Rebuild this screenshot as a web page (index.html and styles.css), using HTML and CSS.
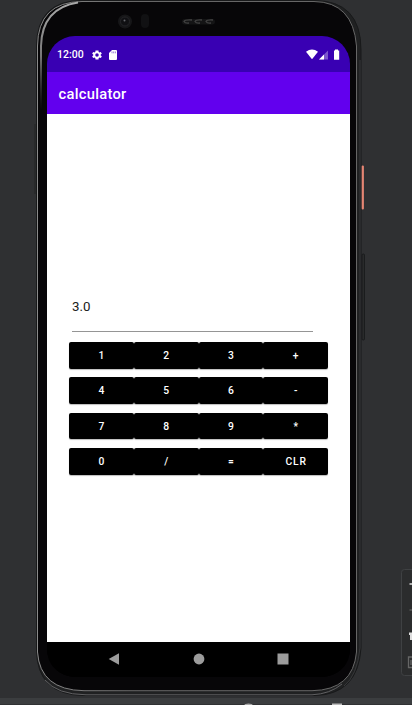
FILE: index.html
```html
<!DOCTYPE html>
<html lang="en">
<head>
<meta charset="utf-8">
<title>calculator</title>
<link rel="stylesheet" href="styles.css">
</head>
<body>
<div class="desktop">
  <svg class="shell" viewBox="0 0 412 705" aria-hidden="true">
    <defs>
      <linearGradient id="metal" x1="0" y1="0" x2="1" y2="0">
        <stop offset="0" stop-color="#8a8a8a"/><stop offset=".3" stop-color="#666"/><stop offset="1" stop-color="#666"/>
      </linearGradient>
      <linearGradient id="shine" x1="0" y1="0" x2="0" y2="1">
        <stop offset="0" stop-color="#aaa"/><stop offset=".5" stop-color="#777"/><stop offset="1" stop-color="#444" stop-opacity="0"/>
      </linearGradient>
    </defs>
    <rect x="34" y="124" width="2" height="70" fill="#28292a"/>
    <path d="M36.500 650V46Q37 .5 82 .5H314Q361 .5 361 50V648Q358 695 314 695.500H84Q37 695 36.500 650Z" fill="#202122" stroke="#18191a"/>
    <path d="M37.500 652V46Q38 2 82 1.500H314Q353 2 356.500 46V652Q353 690 312 690.700H84Q40 690 37.500 652Z" fill="#070608" stroke="url(#metal)"/>
    <path d="M41 110V46Q42 8 78 2.500" fill="none" stroke="url(#shine)" stroke-width="2"/>
    <path d="M45 680Q57 694.500 86 694.800H312Q330 694 342 684" fill="none" stroke="#606062"/>
    <path d="M360 60V648Q357 676 344 686" fill="none" stroke="#37383a"/>
    <rect x="361.700" y="165.500" width="2.200" height="44" rx="1" fill="#e58573"/>
    <rect x="362" y="254" width="2.500" height="86" rx="1" fill="#292a2b" stroke="#171819" stroke-width=".8"/>
    <circle cx="125" cy="21.500" r="7" fill="#161618"/>
    <circle cx="125" cy="21.500" r="4.500" fill="#101013" stroke="#252528"/>
    <circle cx="124.500" cy="20.500" r="1" fill="#66676d"/>
    <rect x="141" y="14" width="8" height="14" rx="4" fill="#111113"/>
    <rect x="182" y="19" width="33" height="5.500" rx="2.700" fill="#141415"/>
    <path d="M192 20q-7-.5-8 1.500 1 2 5 1.500M202 20q-6-.5-7 1.500 1 2 5 1.500M213 20q-6-.5-7 1.500 1 2 5 1.500" fill="none" stroke="#414141" stroke-width="1.300"/>
  </svg>
  <main class="screen">
    <header class="status">
      <span class="clock">12:00</span>
      <svg class="gear" viewBox="0 0 24 24"><path fill="#fff" fill-rule="evenodd" d="M19.400 13a8 8 0 0 0 0-2l2.200-1.700-2-3.500-2.600 1a8 8 0 0 0-1.700-1L15 3H9l-.4 2.800a8 8 0 0 0-1.700 1l-2.600-1-2 3.500L4.500 11a8 8 0 0 0 0 2l-2.200 1.700 2 3.500 2.600-1a8 8 0 0 0 1.700 1L9 21h6l.4-2.800a8 8 0 0 0 1.700-1l2.600 1 2-3.500zM12 15.500a3.500 3.500 0 1 1 0-7 3.500 3.500 0 0 1 0 7z"/></svg>
      <svg class="sd" viewBox="0 0 8 10"><path fill="#fff" d="M3 0h4q1 0 1 1v8q0 1-1 1H1q-1 0-1-1V3z"/><path d="M3 1.500v1.800M4.700 1.500v1.800M6.400 1.500v1.800" stroke="#3900b3" stroke-width=".5"/></svg>
      <svg class="signals" viewBox="0 0 34 12">
        <path fill="#fff" d="M0 2.700Q6-1.500 12 2.700L6 10.200z"/>
        <path fill="#7c57cd" d="M13 10.500L22 1.500v9z"/><path fill="#fff" d="M13 10.500L18 5.500v5z"/>
        <path fill="#fff" d="M29 .5h3v1h1.200v9.200H28V1.500h1z"/>
      </svg>
    </header>
    <div class="appbar">calculator</div>
    <section class="content">
      <div class="display">3.0</div>
      <div class="keys">
        <button>1</button><button>2</button><button>3</button><button>+</button>
        <button>4</button><button>5</button><button>6</button><button>-</button>
        <button>7</button><button>8</button><button>9</button><button>*</button>
        <button>0</button><button>/</button><button>=</button><button>CLR</button>
      </div>
    </section>
    <nav class="navbar">
      <svg viewBox="0 0 12 12"><path d="M.7 6L11 .3v11.400z"/></svg>
      <svg viewBox="0 0 12 12"><circle cx="6" cy="6" r="5.400"/></svg>
      <svg viewBox="0 0 12 12"><path d="M.5.500h11v11H.5z"/></svg>
    </nav>
  </main>
  <svg class="panel" viewBox="0 0 12 109" aria-hidden="true">
    <rect x="1.500" y=".5" width="20" height="106" rx="3" fill="#2b2c2d" stroke="#3f4143"/>
    <path d="M9.500 15H12" stroke="#ddd" stroke-width="1.500"/>
    <path d="M9.500 41H12" stroke="#6d6d6d"/>
    <path d="M9 63.500h3V71h-2V66H9z" fill="#ddd"/>
    <path d="M12 88H8.500v10.500H12M11 91v5" fill="none" stroke="#666" stroke-width="1.300"/>
  </svg>
  <svg class="strip" viewBox="0 0 412 7" aria-hidden="true"><path fill="#3b3d3f" d="M0 0h412v7H0z"/><path d="M0 6.500h412" stroke="#303133"/><ellipse cx="248.500" cy="7" rx="4" ry="1.500" fill="#aaa"/><path d="M332 5.500h10V7h-10z" fill="#bbb"/></svg>
</div>
</body>
</html>
```
FILE: styles.css
```css
* { box-sizing: border-box; }
body { margin: 0; font-family: Roboto, sans-serif; background: #2f3032; }
.desktop { position: relative; width: 412px; height: 705px; padding: 36px 62px 28px 47px; overflow: hidden; }
.shell { position: absolute; left: 0; top: 0; width: 412px; height: 705px; }
.screen { position: relative; width: 303px; height: 641px; display: flex; flex-direction: column; overflow: hidden; border-radius: 28px; background: #000; }
.status { height: 36px; display: flex; align-items: center; padding: 1px 10px 0 10px; background: #3900b3; color: #fff; }
.clock { width: 34px; font-size: 10.5px; font-weight: 500; letter-spacing: 0; }
.gear { width: 12px; height: 12px; margin-right: 6px; }
.sd { width: 8px; height: 10px; }
.signals { width: 34px; height: 12px; margin-left: auto; }
.appbar { height: 42px; padding: 1px 0 0 11.5px; display: flex; align-items: center; background: #6200ee; color: #fff; font-size: 14.7px; font-weight: 500; letter-spacing: .3px; }
.content { flex: 1; background: #fff; padding: 184px 22px 0; }
.display { width: 241px; height: 34px; margin-left: 3px; border-bottom: 1px solid #959595; color: #202020; font-size: 13.3px; line-height: 18px; }
.keys { margin-top: 10px; display: grid; grid-template-columns: repeat(4, 64.75px); grid-auto-rows: 26.5px; row-gap: 8.9px; }
button { appearance: none; border: 0; padding: 0 0 0 1px; margin: 0; border-radius: 2px; background: #000; color: #fff; font: 500 10.3px Roboto, sans-serif; letter-spacing: .9px; box-shadow: 0 1px 1px #0004; }
.navbar { height: 35px; background: #000; display: flex; align-items: center; justify-content: space-between; padding: 0 61px 1px 61px; }
.navbar svg { width: 12px; height: 12px; fill: #9c9c9c; }
.panel { position: absolute; left: 400px; top: 569px; width: 12px; height: 109px; }
.strip { position: absolute; left: 0; top: 698px; width: 412px; height: 7px; }
```
